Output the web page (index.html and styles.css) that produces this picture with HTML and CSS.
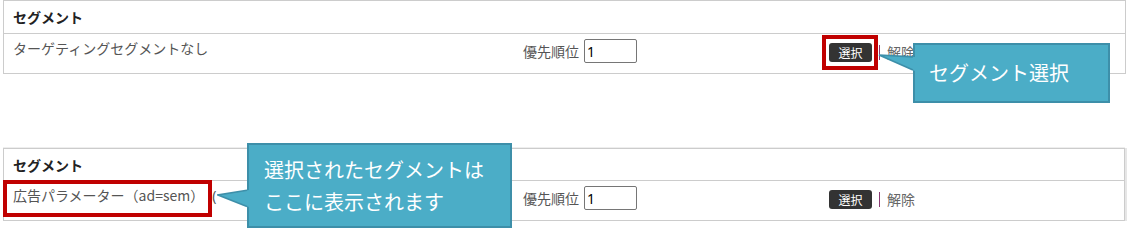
FILE: index.html
```html
<!DOCTYPE html>
<html lang="ja">
<head>
<meta charset="utf-8">
<title>セグメント</title>
<link rel="stylesheet" href="styles.css">
</head>
<body>
<div class="page">
  <section class="seg-table first">
    <div class="seg-head">セグメント</div>
    <div class="seg-row">
      <div class="cell name">ターゲティングセグメントなし</div>
      <div class="cell prio"><span>優先順位</span><input class="prio-input" type="text" value="1"></div>
      <div class="cell actions"><button class="btn-select">選択</button><span class="sep"></span><a class="unlink">解除</a></div>
    </div>
  </section>

  <section class="seg-table second">
    <div class="seg-head">セグメント</div>
    <div class="seg-row">
      <div class="cell name">広告パラメーター（ad=sem）<span class="name-extra">(</span></div>
      <div class="cell prio"><span>優先順位</span><input class="prio-input" type="text" value="1"></div>
      <div class="cell actions"><button class="btn-select">選択</button><span class="sep"></span><a class="unlink">解除</a></div>
    </div>
  </section>

  <div class="mark mark-btn"></div>
  <div class="mark mark-name"></div>

  <div class="callout callout-select">セグメント選択</div>
  <svg class="wedge wedge-select" width="40" height="22" viewBox="0 0 40 22">
    <polygon points="1,2 37,4 37,18" fill="#4badc7"/>
    <polyline points="35,3.9 1,2 35,17" fill="none" stroke="#3d8fa9" stroke-width="1.6"/>
  </svg>

  <div class="callout callout-shown">選択されたセグメントは<br>ここに表示されます</div>
  <svg class="wedge wedge-shown" width="34" height="24" viewBox="0 0 34 24">
    <polygon points="1,7 32,2 32,19" fill="#4badc7"/>
    <polyline points="30,2.3 1,7 30,18.6" fill="none" stroke="#3d8fa9" stroke-width="1.6"/>
  </svg>
</div>
</body>
</html>
```

FILE: styles.css
```css
* { box-sizing: border-box; }

html, body {
  margin: 0;
  padding: 0;
  background: #ffffff;
}

body {
  font-family: "Noto Sans CJK JP", "Noto Sans", sans-serif;
  font-size: 14px;
  color: #555555;
}

.page {
  position: relative;
  width: 1128px;
  height: 233px;
  padding: 0 0 0 3px;
}

.seg-table {
  border: 1px solid #cccccc;
  background: #ffffff;
}

.seg-table.first {
  width: 1123px;
}

.seg-table.second {
  width: 1122px;
  margin-top: 74px;
  box-shadow: 2px 0 0 #e6e6e6, 0 -1px 0 #eeeeee;
}

.seg-head {
  height: 33px;
  border-bottom: 1px solid #cccccc;
  padding: 0 9px;
  display: flex;
  align-items: center;
  font-weight: bold;
  color: #222222;
}

.second .seg-head {
  height: 32px;
}

.seg-row {
  display: grid;
  grid-template-columns: 510px 306px 1fr;
  height: 39px;
  padding-top: 5px;
  align-items: start;
}

.cell {
  padding: 0 9px;
  height: 24px;
  display: flex;
  align-items: center;
  white-space: nowrap;
}

.cell.name {
  margin-top: -3px;
}

.name-extra {
  margin-left: 8px;
  font-family: "Noto Sans", sans-serif;
  color: #555555;
}

.prio {
  gap: 5px;
}

.prio-input {
  width: 53px;
  height: 24px;
  border: 1px solid #767676;
  border-radius: 2px;
  padding: 0 2px;
  font-family: "Noto Sans", "Noto Sans CJK JP", sans-serif;
  font-size: 14px;
  color: #000000;
  background: #ffffff;
}

.actions {
  padding-top: 2px;
}

.btn-select {
  width: 43px;
  height: 19px;
  border: none;
  border-radius: 3px;
  background: #333333;
  color: #ffffff;
  font-family: "Noto Sans CJK JP", sans-serif;
  font-size: 12px;
  line-height: 19px;
  padding: 0;
}

.sep {
  display: inline-block;
  width: 1px;
  height: 15px;
  background: #8b3a73;
  margin: 0 7px 0 7px;
}

.unlink {
  color: #666666;
  font-size: 14px;
}

/* annotation overlays */
.mark {
  position: absolute;
  border: 4px solid #c00000;
}

.mark-btn {
  left: 822px;
  top: 35px;
  width: 56px;
  height: 35px;
}

.mark-name {
  left: 3px;
  top: 180px;
  width: 209px;
  height: 37px;
}

.callout {
  position: absolute;
  background: #4badc7;
  border: 2px solid #3d8fa9;
  color: #ffffff;
  font-size: 20px;
  white-space: nowrap;
}

.callout-select {
  left: 913px;
  top: 43px;
  width: 197px;
  height: 60px;
  padding: 0 0 0 14px;
  line-height: 56px;
}

.callout-shown {
  left: 247px;
  top: 143px;
  width: 265px;
  height: 85px;
  padding: 9px 0 0 15px;
  line-height: 32px;
}

.wedge {
  position: absolute;
  display: block;
}

.wedge-select {
  left: 878px;
  top: 53px;
}

.wedge-shown {
  left: 217px;
  top: 188px;
}
```
